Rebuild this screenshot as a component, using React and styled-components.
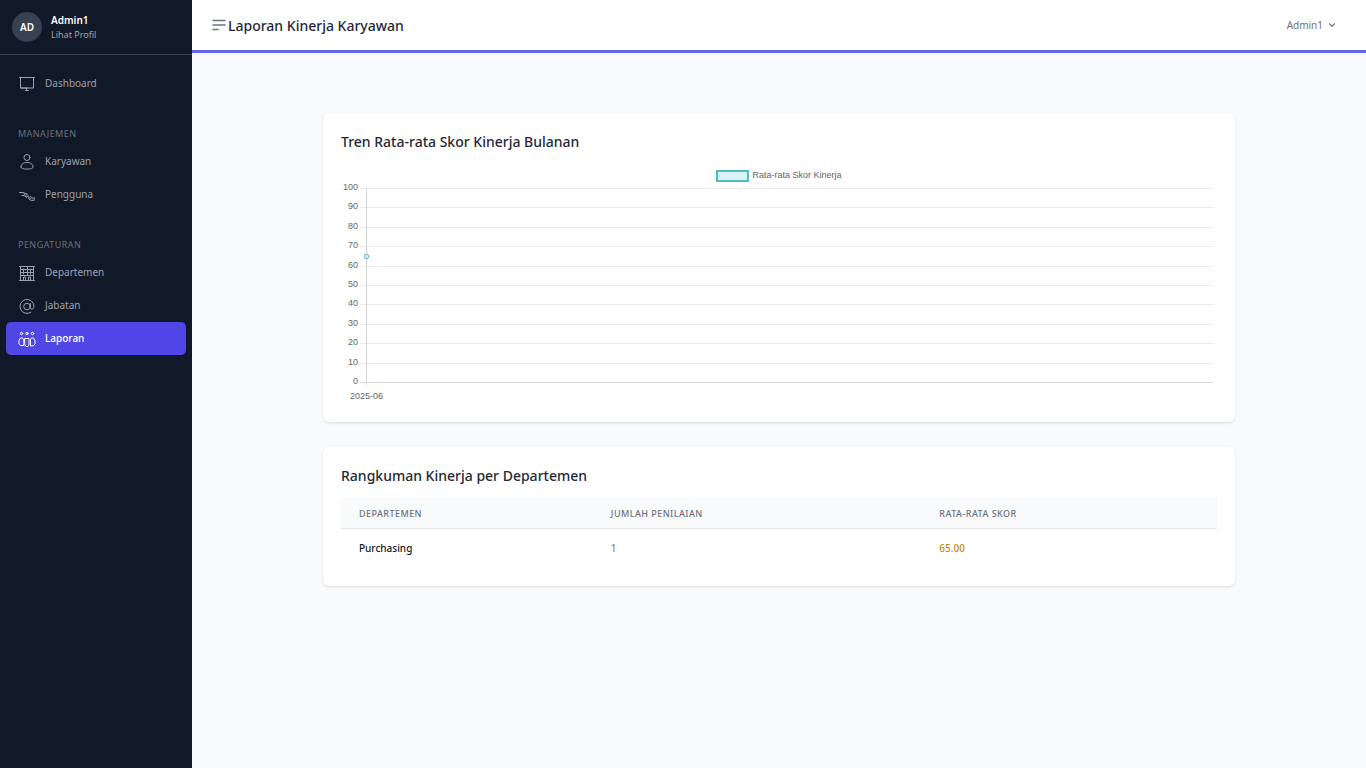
import React from "react";
import styled, { createGlobalStyle, css } from "styled-components";

const GlobalStyle = createGlobalStyle`
  *, *::before, *::after { box-sizing: border-box; }
  body {
    margin: 0;
    background: #f9fafb;
    color: #111827;
    font-family: "Noto Sans", "Open Sans", sans-serif;
    font-size: 10px;
    line-height: 15px;
  }
  h1, h2, h3, p, ul { margin: 0; padding: 0; }
  ul { list-style: none; }
  a { color: inherit; text-decoration: none; }
  button { font: inherit; color: inherit; background: none; border: 0; padding: 0; cursor: pointer; }
`;

const Shell = styled.div`
  display: flex;
  min-height: 100vh;
`;

const Sidebar = styled.aside`
  flex: 0 0 192px;
  background: #111827;
  color: #9ca3af;
`;

const Profile = styled.a`
  display: flex;
  align-items: center;
  gap: 9px;
  height: 55px;
  padding: 0 12px;
  border-bottom: 1px solid #374151;
`;

const Avatar = styled.span`
  display: flex;
  align-items: center;
  justify-content: center;
  width: 30px;
  height: 30px;
  border-radius: 50%;
  background: #374151;
  color: #fff;
  font-weight: 600;
`;

const ProfileText = styled.span`
  display: flex;
  flex-direction: column;
`;

const ProfileName = styled.span`
  color: #fff;
  font-weight: 600;
  line-height: 15px;
`;

const ProfileHint = styled.span`
  font-size: 9px;
  line-height: 13px;
`;

const Nav = styled.nav`
  padding: 12px 6px;
`;

const NavHeading = styled.h3`
  margin: 27px 12px 5px;
  color: #6b7280;
  font-size: 9px;
  font-weight: 400;
  line-height: 13px;
  letter-spacing: 0.05em;
  text-transform: uppercase;
`;

const NavLink = styled.a`
  display: flex;
  align-items: center;
  gap: 9px;
  height: 33px;
  padding: 0 12px;
  border-radius: 5px;
  ${({ $active }) =>
    $active &&
    css`
      background: #4f46e5;
      color: #fff;
      font-weight: 500;
    `}
`;

const NavIcon = styled.svg`
  width: 18px;
  height: 18px;
  fill: none;
  stroke: currentColor;
  stroke-width: 1;
  stroke-linecap: round;
  stroke-linejoin: round;
`;

const Page = styled.div`
  flex: 1;
  min-width: 0;
`;

const TopBar = styled.header`
  display: flex;
  align-items: center;
  justify-content: space-between;
  height: 53px;
  padding: 0 30px 0 18px;
  background: #fff;
  border-bottom: 3px solid #6366f1;
`;

const TitleGroup = styled.div`
  display: flex;
  align-items: center;
`;

const MenuButton = styled.button`
  display: flex;
  color: #6b7280;
`;

const PageTitle = styled.h1`
  color: #1f2937;
  font-size: 14px;
  font-weight: 500;
  line-height: 21px;
`;

const UserButton = styled.button`
  display: flex;
  align-items: center;
  gap: 5px;
  color: #6b7280;
`;

const Content = styled.main`
  display: grid;
  gap: 25px;
  max-width: 960px;
  margin: 0 auto;
  padding: 60px 24px;
`;

const Card = styled.section`
  padding: 18px;
  background: #fff;
  border-radius: 6px;
  box-shadow: 0 1px 3px rgba(0, 0, 0, 0.1), 0 1px 2px -1px rgba(0, 0, 0, 0.1);
`;

const CardTitle = styled.h2`
  margin-bottom: 12px;
  color: #1f2937;
  font-size: 14px;
  font-weight: 500;
  line-height: 21px;
`;

const Legend = styled.div`
  display: flex;
  align-items: flex-start;
  justify-content: center;
  gap: 3px;
  height: 18px;
  padding-top: 6px;
  color: #666;
  font-family: "Liberation Sans", Arial, sans-serif;
  font-size: 9px;
  line-height: 10px;
`;

const LegendSwatch = styled.span`
  width: 33px;
  height: 12px;
  border: 2px solid #4bc0c0;
  background: #dbf2f2;
`;

const ChartBox = styled.div`
  padding-right: 4px;
`;

const Chart = styled.svg`
  display: block;
  width: 100%;
  height: 222px;
  overflow: visible;
  font-family: "Liberation Sans", Arial, sans-serif;
  font-size: 9px;
`;

const Table = styled.table`
  width: 100%;
  table-layout: fixed;
  border-collapse: separate;
  border-spacing: 0;
  text-align: left;
`;

const Column = styled.col`
  width: ${({ $share }) => $share}%;
`;

const HeadCell = styled.th`
  padding: 9px 18px 8px;
  background: #f9fafb;
  border-bottom: 1px solid #e5e7eb;
  color: #6b7280;
  font-size: 9px;
  font-weight: 500;
  line-height: 13px;
  letter-spacing: 0.05em;
  text-transform: uppercase;
`;

const Cell = styled.td`
  padding: 12px 18px;
  color: ${({ $tone }) => $tone || "#6b7280"};
  font-weight: ${({ $strong }) => ($strong ? 500 : 400)};
`;

const icons = {
  dashboard: (
    <>
      <path d="M1.500 2.500h15M2.500 2.500v10.500h13V2.500" />
      <path d="M3 13h7M8.500 13.500v2M7.500 15.500h3" />
    </>
  ),
  person: (
    <>
      <circle cx="9" cy="4.500" r="3" />
      <path d="M3 14c0-3 2.500-4.500 6-4.500s6 1.500 6 4.500c0 1.500-2 2-6 2s-6-.5-6-2z" />
    </>
  ),
  hands: (
    <>
      <path d="M1.500 6.500h3.500l4 1.500M4 9.500h2l1.500 1M6 8l1.500 1M8.500 8l1.500 1.500" />
      <path d="M7.500 10.500c.5-1 1.500-1 1.500 0l-.5 1M9.500 10.500c.8-.8 1.800 0 1.300 1l-.3.800M11.500 12c.8-.6 1.600 0 1.200.8M12.500 10.500l2 1.500h2.200M11 13l1.500 1.300h3.700v-1" />
    </>
  ),
  building: (
    <>
      <path d="M1.500 2.500h15M2.500 2.500v14M15.500 2.500v14M1.500 16.500h15" />
      <path d="M2.500 5.500h13M2.500 8.500h7M5.500 5v5M9.500 2.500v8M12.500 5v5M2.500 11.500h13" />
      <path d="M5.500 16v-3h2v3M10.500 16v-3h2v3M10 8.500h5" />
    </>
  ),
  at: (
    <>
      <circle cx="9" cy="9.500" r="3.300" />
      <path d="M12.300 6.500v4.200c0 2.300 3.700 2 3.700-1.500a7 7 0 1 0-3 6" />
    </>
  ),
  team: (
    <>
      <circle cx="3.500" cy="3.500" r="1.200" />
      <circle cx="9" cy="3.500" r="1.200" />
      <circle cx="14.500" cy="3.500" r="1.200" />
      <path d="M5.500 15.500H2.500L1 14v-3.500l1.500-2.500h2l1 1.500z" />
      <path d="M7 8.500h4v6.500l-1 1.500H8L7 15z" />
      <path d="M12.500 15.500v-6l1-1.500h2l1.500 2.500V14l-1.500 1.500z" />
    </>
  ),
};

const navGroups = [
  { items: [{ label: "Dashboard", icon: "dashboard" }] },
  {
    heading: "Manajemen",
    items: [
      { label: "Karyawan", icon: "person" },
      { label: "Pengguna", icon: "hands" },
    ],
  },
  {
    heading: "Pengaturan",
    items: [
      { label: "Departemen", icon: "building" },
      { label: "Jabatan", icon: "at" },
      { label: "Laporan", icon: "team", active: true },
    ],
  },
];

const ticks = [100, 90, 80, 70, 60, 50, 40, 30, 20, 10, 0];
const PLOT_TOP = 6;
const PLOT_HEIGHT = 194;
const AXIS_X = 25;
const yOf = (score) => Math.round(PLOT_TOP + ((100 - score) / 100) * PLOT_HEIGHT) + 0.5;

function ScoreChart() {
  return (
    <Chart role="img" aria-label="Rata-rata Skor Kinerja per bulan">
      {ticks.map((tick) => (
        <g key={tick}>
          <line
            x1={AXIS_X - 6}
            x2="100%"
            y1={yOf(tick)}
            y2={yOf(tick)}
            stroke={tick === 0 ? "#d9d9d9" : "#ebebeb"}
          />
          <text x="17" y={yOf(tick) + 1.5} textAnchor="end" fill="#666">
            {tick}
          </text>
        </g>
      ))}
      <line x1={AXIS_X + 0.5} x2={AXIS_X + 0.5} y1={yOf(100)} y2={yOf(0)} stroke="#d4d4d4" />
      <line x1={AXIS_X + 0.5} x2={AXIS_X + 0.5} y1={yOf(0)} y2={yOf(0) + 6} stroke="#ebebeb" />
      <circle cx={AXIS_X + 0.5} cy={yOf(65)} r="2.25" fill="#dbf2f2" stroke="#4bc0c0" />
      <text x={AXIS_X + 0.5} y="217" textAnchor="middle" fill="#666">
        2025-06
      </text>
    </Chart>
  );
}

const columns = [
  { label: "Departemen", share: 28.75 },
  { label: "Jumlah Penilaian", share: 37.5 },
  { label: "Rata-rata Skor", share: 33.75 },
];

const departments = [{ name: "Purchasing", count: 1, score: "65.00" }];

export default function App() {
  return (
    <>
      <GlobalStyle />
      <Shell>
        <Sidebar>
          <Profile href="#profil">
            <Avatar>AD</Avatar>
            <ProfileText>
              <ProfileName>Admin1</ProfileName>
              <ProfileHint>Lihat Profil</ProfileHint>
            </ProfileText>
          </Profile>
          <Nav aria-label="Menu utama">
            {navGroups.map((group) => (
              <React.Fragment key={group.heading || "utama"}>
                {group.heading && <NavHeading>{group.heading}</NavHeading>}
                <ul>
                  {group.items.map((item) => (
                    <li key={item.label}>
                      <NavLink
                        href={`#${item.label.toLowerCase()}`}
                        $active={item.active}
                        aria-current={item.active ? "page" : undefined}
                      >
                        <NavIcon viewBox="0 0 18 18" aria-hidden="true">
                          {icons[item.icon]}
                        </NavIcon>
                        {item.label}
                      </NavLink>
                    </li>
                  ))}
                </ul>
              </React.Fragment>
            ))}
          </Nav>
        </Sidebar>

        <Page>
          <TopBar>
            <TitleGroup>
              <MenuButton type="button" aria-label="Buka menu">
                <svg width="18" height="18" viewBox="0 0 24 24" fill="none" stroke="currentColor" strokeWidth="2" strokeLinecap="round">
                  <path d="M4 6h16M4 12h16M4 18h7" />
                </svg>
              </MenuButton>
              <PageTitle>Laporan Kinerja Karyawan</PageTitle>
            </TitleGroup>
            <UserButton type="button">
              Admin1
              <svg width="8" height="8" viewBox="0 0 8 8" fill="none" stroke="currentColor" strokeWidth="1.2" aria-hidden="true">
                <path d="M1.200 2.500 4 5.300 6.800 2.500" />
              </svg>
            </UserButton>
          </TopBar>

          <Content>
            <Card>
              <CardTitle>Tren Rata-rata Skor Kinerja Bulanan</CardTitle>
              <Legend>
                <LegendSwatch />
                Rata-rata Skor Kinerja
              </Legend>
              <ChartBox>
                <ScoreChart />
              </ChartBox>
            </Card>

            <Card>
              <CardTitle>Rangkuman Kinerja per Departemen</CardTitle>
              <Table>
                <colgroup>
                  {columns.map((column) => (
                    <Column key={column.label} $share={column.share} />
                  ))}
                </colgroup>
                <thead>
                  <tr>
                    {columns.map((column) => (
                      <HeadCell key={column.label} scope="col">{column.label}</HeadCell>
                    ))}
                  </tr>
                </thead>
                <tbody>
                  {departments.map((row) => (
                    <tr key={row.name}>
                      <Cell $tone="#111827" $strong>{row.name}</Cell>
                      <Cell>{row.count}</Cell>
                      <Cell $tone="#ca8a04" $strong>{row.score}</Cell>
                    </tr>
                  ))}
                </tbody>
              </Table>
            </Card>
          </Content>
        </Page>
      </Shell>
    </>
  );
}
